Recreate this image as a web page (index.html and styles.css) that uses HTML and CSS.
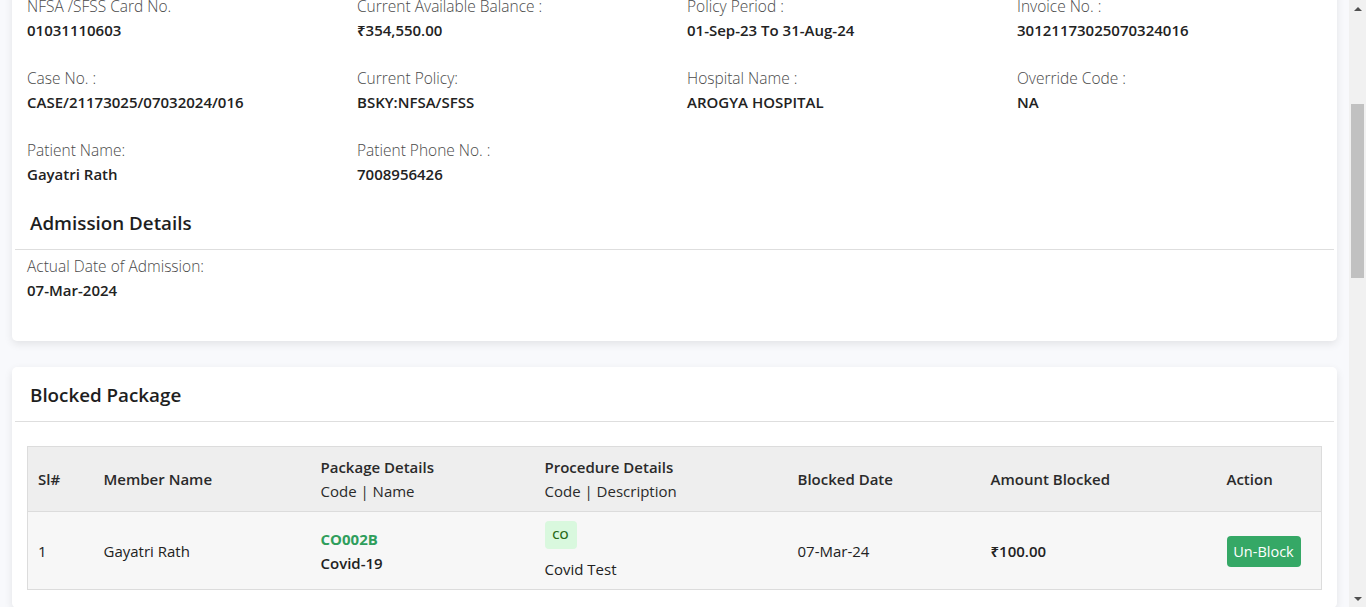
FILE: index.html
```html
<!DOCTYPE html>
<html lang="en">
<head>
<meta charset="utf-8">
<title>Claim Details</title>
<link rel="stylesheet" href="styles.css">
</head>
<body>
<div class="page">
  <main class="content">
    <section class="card card-info">
      <div class="info-grid">
        <div class="field"><div class="label">NFSA /SFSS Card No.</div><div class="value">01031110603</div></div>
        <div class="field"><div class="label">Current Available Balance :</div><div class="value">₹354,550.00</div></div>
        <div class="field"><div class="label">Policy Period :</div><div class="value">01-Sep-23 To 31-Aug-24</div></div>
        <div class="field"><div class="label">Invoice No. :</div><div class="value">30121173025070324016</div></div>
        <div class="field"><div class="label">Case No. :</div><div class="value">CASE/21173025/07032024/016</div></div>
        <div class="field"><div class="label">Current Policy:</div><div class="value">BSKY:NFSA/SFSS</div></div>
        <div class="field"><div class="label">Hospital Name :</div><div class="value">AROGYA HOSPITAL</div></div>
        <div class="field"><div class="label">Override Code :</div><div class="value">NA</div></div>
        <div class="field"><div class="label">Patient Name:</div><div class="value">Gayatri Rath</div></div>
        <div class="field"><div class="label">Patient Phone No. :</div><div class="value">7008956426</div></div>
      </div>
      <h2 class="section-title section-title-mid">Admission Details</h2>
      <div class="info-grid info-grid-last">
        <div class="field"><div class="label">Actual Date of Admission:</div><div class="value">07-Mar-2024</div></div>
      </div>
    </section>

    <section class="card card-blocked">
      <h2 class="section-title section-title-top">Blocked Package</h2>
      <div class="table-wrap">
        <table class="pkg-table">
          <colgroup>
            <col class="c-sl"><col class="c-member"><col class="c-pkg"><col class="c-proc"><col class="c-date"><col class="c-amt"><col class="c-act">
          </colgroup>
          <thead>
            <tr>
              <th>Sl#</th>
              <th>Member Name</th>
              <th>Package Details<br><span class="sub">Code | Name</span></th>
              <th>Procedure Details<br><span class="sub">Code | Description</span></th>
              <th>Blocked Date</th>
              <th>Amount Blocked</th>
              <th>Action</th>
            </tr>
          </thead>
          <tbody>
            <tr>
              <td>1</td>
              <td>Gayatri Rath</td>
              <td><div class="pkg-code">CO002B</div><div class="pkg-name">Covid-19</div></td>
              <td class="proc"><span class="badge">CO</span><div>Covid Test</div></td>
              <td>07-Mar-24</td>
              <td class="amt">₹100.00</td>
              <td><button class="btn-unblock" type="button">Un-Block</button></td>
            </tr>
          </tbody>
        </table>
      </div>
    </section>
  </main>
  <div class="scrollbar">
    <div class="sb-btn"><span class="tri tri-up"></span></div>
    <div class="sb-track"><div class="sb-thumb"></div></div>
    <div class="sb-btn"><span class="tri tri-down"></span></div>
  </div>
</div>
</body>
</html>
```

FILE: styles.css
```css
* { box-sizing: border-box; }
html, body { margin: 0; padding: 0; height: 100%; overflow: hidden; }
body {
  font-family: "Open Sans", "Noto Sans", "Liberation Sans", sans-serif;
  font-size: 15px;
  color: #222;
}
.page {
  display: flex;
  height: 100vh;
  overflow: hidden;
}
.content {
  flex: 1;
  background: #f8f9fc;
  padding: 0 12px;
  overflow: hidden;
}
.card {
  background: #fff;
  border-radius: 5px;
  box-shadow: 0 3px 8px rgba(0, 0, 0, 0.09);
}
.card-info {
  margin-top: -30px;
  padding: 24px 3px 39px;
}
.info-grid {
  display: grid;
  grid-template-columns: repeat(4, 330px);
  padding-left: 12px;
}
.field { margin-bottom: 24px; }
.info-grid-last .field { margin-bottom: 0; }
.label {
  line-height: 24px;
  font-weight: 300;
  color: #4a4a4a;
  font-size: 15.5px;
}
.value {
  line-height: 24px;
  font-weight: 600;
  color: #222;
  font-size: 15px;
}
.section-title {
  margin: 0 0 5px;
  padding: 0 15px 14px;
  font-size: 18.8px;
  line-height: 24px;
  font-weight: 600;
  color: #1e1e1e;
  border-bottom: 1px solid #dedede;
}
.section-title-mid { padding-top: 1px; margin-bottom: 4px; }
.card-blocked {
  margin-top: 26px;
  padding: 16px 3px 18px;
}
.section-title-top { margin-bottom: 24px; }
.table-wrap { padding: 0 13px 0 12px; }
.pkg-table {
  width: 100%;
  border-collapse: collapse;
  table-layout: fixed;
  font-size: 15px;
  color: #222;
}
.c-sl { width: 66px; }
.c-member { width: 217px; }
.c-pkg { width: 224px; }
.c-proc { width: 253px; }
.c-date { width: 193px; }
.c-amt { width: 236px; }
.c-act { width: 105px; }
.pkg-table th, .pkg-table td {
  text-align: left;
  vertical-align: middle;
  padding: 8px 10px;
  line-height: 24px;
}
.pkg-table thead tr {
  background: #eeeeee;
  border: 1px solid #dcdcdc;
}
.pkg-table th { font-weight: 600; color: #2a2a2a; }
.pkg-table th .sub { font-weight: 400; }
.pkg-table tbody tr {
  background: #f7f7f7;
  border: 1px solid #dcdcdc;
}
.pkg-table td { padding-top: 9px; }
.pkg-code { color: #2f9e5c; font-weight: 700; }
.pkg-name { font-weight: 600; }
.amt { font-weight: 600; }
.badge {
  display: inline-block;
  width: 32px;
  height: 28px;
  line-height: 28px;
  text-align: center;
  background: #d9f8de;
  color: #2a6a18;
  font-size: 11.5px;
  font-weight: 600;
  border-radius: 4px;
  margin-bottom: 8px;
}
.proc div { line-height: 24px; }
.btn-unblock {
  font-family: inherit;
  font-size: 14.5px;
  color: #fff;
  background: #35a866;
  border: none;
  border-radius: 4px;
  width: 74px;
  height: 31px;
  padding: 0;
}
.scrollbar {
  width: 17px;
  flex: none;
  background: #f1f1f1;
  display: flex;
  flex-direction: column;
}
.sb-btn {
  height: 17px;
  flex: none;
  display: flex;
  align-items: center;
  justify-content: center;
}
.tri { width: 0; height: 0; border-left: 4px solid transparent; border-right: 4px solid transparent; }
.tri-up { border-bottom: 4px solid #505050; }
.tri-down { border-top: 4px solid #505050; }
.sb-track { flex: 1; padding: 87px 2px 0; }
.sb-thumb { height: 174px; background: #c1c1c1; }
```
